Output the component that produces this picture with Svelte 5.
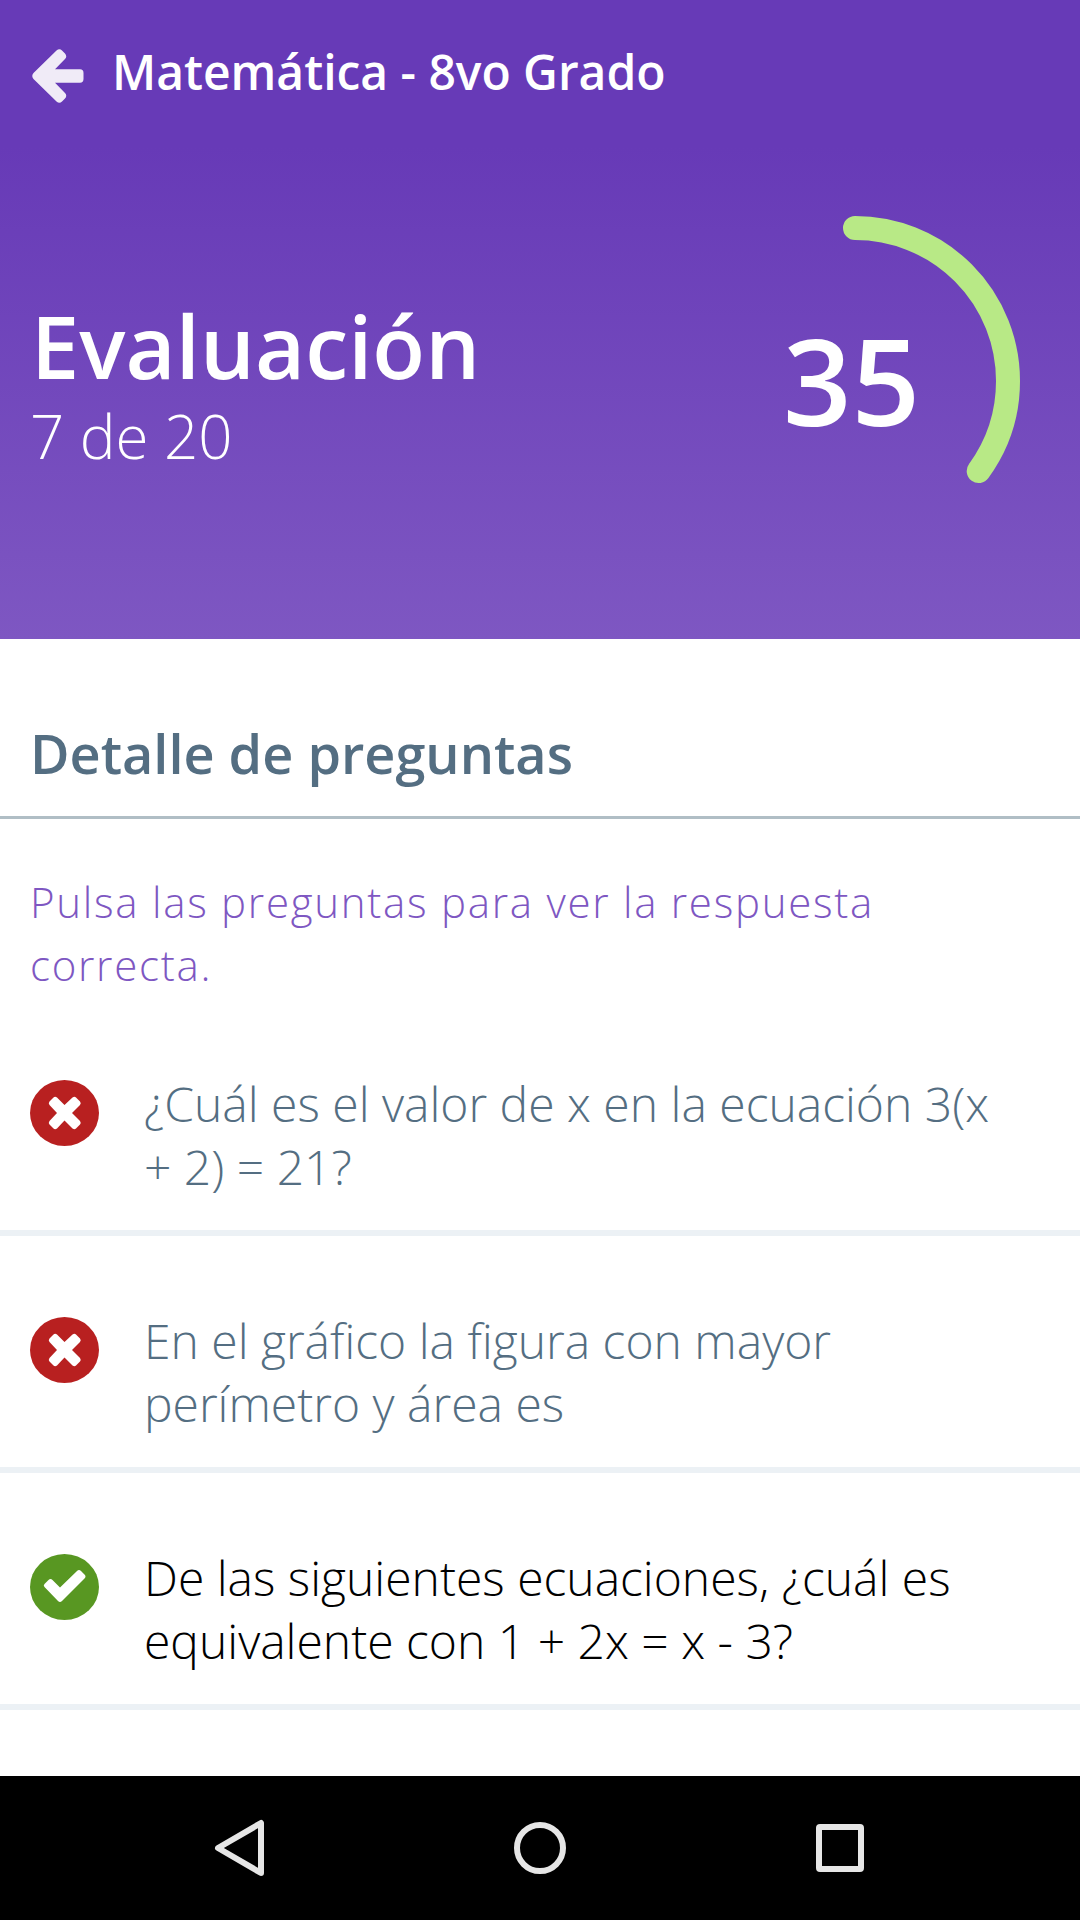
<script lang="ts">
  type Question = { text: string; correct: boolean };

  const percent = 35;
  const radius = 153;
  const circumference = 2 * Math.PI * radius;

  const questions: Question[] = [
    { text: "¿Cuál es el valor de x en la ecuación 3(x + 2) = 21?", correct: false },
    { text: "En el gráfico la figura con mayor perímetro y área es", correct: false },
    {
      text: "De las siguientes ecuaciones, ¿cuál es equivalente con 1 + 2x = x - 3?",
      correct: true,
    },
  ];
</script>

<style>
  :global(body) {
    margin: 0;
    background: #fff;
  }

  .app {
    display: flex;
    flex-direction: column;
    width: 1080px;
    height: 1920px;
    overflow: hidden;
    background: #fff;
    font-family: "Open Sans", "Noto Sans", sans-serif;
  }

  header {
    box-sizing: border-box;
    height: 639px;
    flex: none;
    color: #fff;
    background: linear-gradient(#673ab7 147px, #7e57c2);
  }

  .toolbar {
    display: flex;
    align-items: center;
    height: 147px;
    padding-left: 32px;
  }

  .back {
    width: 52px;
    height: 54px;
    margin: 5px 28px 0 0;
    fill: #fff;
    opacity: 0.9;
  }

  h1,
  h2,
  h3,
  p,
  ul {
    margin: 0;
    padding: 0;
    font-weight: 300;
  }

  h1 {
    margin-bottom: 4px;
    font-size: 48px;
    font-weight: 600;
    line-height: 66px;
    letter-spacing: -0.03px;
  }

  .summary {
    display: flex;
    justify-content: space-between;
    padding: 57px 48px 0 30px;
  }

  .score {
    padding-top: 99px;
  }

  h2 {
    padding-left: 1px;
    font-size: 86.4px;
    font-weight: 600;
    line-height: 86px;
    letter-spacing: 0.1px;
  }

  .score p {
    margin-top: 17px;
    font-size: 60px;
    line-height: 60px;
  }

  .ring {
    display: grid;
    width: 354px;
    height: 354px;
  }

  .ring svg,
  .ring span {
    grid-area: 1 / 1;
  }

  .ring circle {
    fill: none;
    stroke: #b8e986;
    stroke-width: 24;
    stroke-linecap: round;
  }

  .ring span {
    align-self: center;
    justify-self: center;
    padding: 0 7px 2px 0;
    font-size: 120px;
    font-weight: 600;
    line-height: 164px;
  }

  main {
    flex: 1;
  }

  h3 {
    height: 177px;
    padding-left: 30px;
    border-bottom: 3px solid #b0bec5;
    color: #546e82;
    font-size: 54px;
    font-weight: 600;
    line-height: 228px;
  }

  .hint {
    padding: 51px 30px 0;
    height: 129px;
    color: #7e57c2;
    font-size: 42px;
    line-height: 63px;
    letter-spacing: 1.73px;
  }

  li {
    display: flex;
    box-sizing: border-box;
    height: 237px;
    padding: 73px 60px 0 30px;
    border-bottom: 6px solid #ecf1f5;
    color: #546e82;
    font-size: 48px;
    line-height: 63px;
  }

  li.correct {
    color: #000;
  }

  li svg {
    flex: none;
    width: 69px;
    height: 66px;
    margin: 8px 45px 0 0;
    fill: #b82020;
  }

  li.correct svg {
    fill: #589722;
  }

  li .mark {
    fill: #fff;
  }

  nav {
    display: flex;
    flex: none;
    align-items: center;
    justify-content: center;
    gap: 240px;
    height: 144px;
    background: #000;
  }

  nav svg {
    width: 60px;
    height: 60px;
    fill: none;
    stroke: #e6e6e6;
    stroke-width: 6;
    stroke-linejoin: round;
  }
</style>

<div class="app">
  <header>
    <div class="toolbar">
      <svg class="back" viewBox="0 0 52 54">
        <path
          d="M1.500 24L24.500 1.500Q27.500 -1 30 1.500L33 4.500Q35.500 7.500 33 10L23 20.300H48Q51.500 20.300 51.500 24V30Q51.500 33.700 48 33.700H23L33 44Q35.500 46.500 33 49.500L30 52.500Q27.500 55 24.500 52.500L1.500 30Q-1 27 1.500 24Z"
        />
      </svg>
      <h1>Matemática - 8vo Grado</h1>
    </div>
    <div class="summary">
      <div class="score">
        <h2>Evaluación</h2>
        <p>7 de 20</p>
      </div>
      <div class="ring">
        <svg viewBox="0 0 354 354">
          <circle
            cx="177"
            cy="177"
            r={radius}
            transform="rotate(-90 177 177)"
            stroke-dasharray="{(circumference * percent) / 100} {circumference}"
          />
        </svg>
        <span>{percent}</span>
      </div>
    </div>
  </header>

  <main>
    <h3>Detalle de preguntas</h3>
    <p class="hint">Pulsa las preguntas para ver la respuesta correcta.</p>
    <ul>
      {#each questions as question}
        <li class:correct={question.correct}>
          <svg viewBox="0 0 69 66">
            <rect width="69" height="66" rx="34.5" ry="33" />
            {#if question.correct}
              <path
                class="mark"
                d="M14.5 30L18.5 26Q20.500 24 22.500 26L30 33.500L47 17Q49 15 51 17L54.500 20.500Q56.500 22.500 54.500 24.500L32 47Q30 49 28 47L14.500 33Q13 31.500 14.500 30Z"
              />
            {:else}
              <path
                class="mark"
                d="M19.500 21.500L23.500 17.500Q25 16 27 17.500L34.500 25L42.500 17.500Q44.500 16 46 17.500L50 21.500Q51.500 23 50 25L42 33L50 41Q51.500 43 50 44.500L46 48.500Q44.500 50 42.500 48.500L34.500 40.500L27 48.500Q25 50 23.500 48.500L19.500 44.500Q18 43 19.500 41L27 33L19.500 25Q18 23 19.500 21.500Z"
              />
            {/if}
          </svg>
          <span>{question.text}</span>
        </li>
      {/each}
    </ul>
  </main>

  <nav>
    <svg viewBox="0 0 60 60"><path d="M8 30L51 5V55Z" /></svg>
    <svg viewBox="0 0 60 60"><circle cx="30" cy="30" r="23" /></svg>
    <svg viewBox="0 0 60 60"><rect x="9" y="9" width="42" height="42" rx="1" /></svg>
  </nav>
</div>
